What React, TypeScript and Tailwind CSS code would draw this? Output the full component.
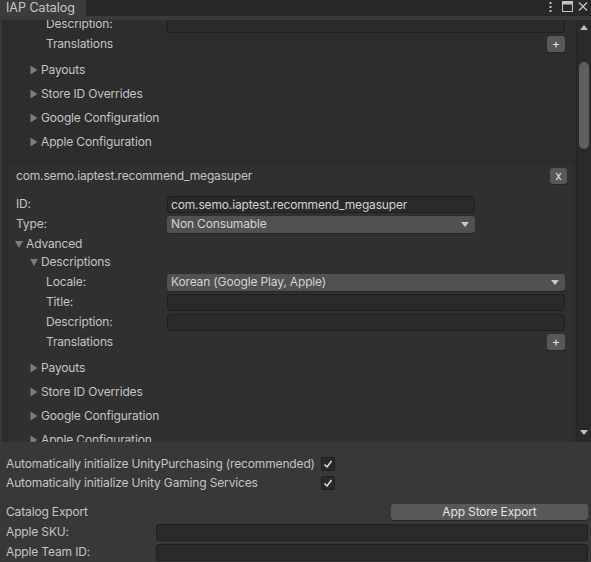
import React from "react";

const TriRight = () => (
  <svg width="8" height="10" viewBox="0 0 8 10" className="shrink-0">
    <path d="M0.5 0.5 L7.5 5 L0.5 9.5 Z" fill="#7c7c7c" />
  </svg>
);
const TriDown = () => (
  <svg width="8" height="8" viewBox="0 0 8 8" className="shrink-0">
    <path d="M0 1 L8 1 L4 8 Z" fill="#7c7c7c" />
  </svg>
);
const DropArrow = () => (
  <svg width="8" height="5" viewBox="0 0 8 5" className="shrink-0">
    <path d="M0 0 L8 0 L4 5 Z" fill="#c8c8c8" />
  </svg>
);

const Input = ({ w, value }: { w: string; value?: string }) => (
  <div className={`${w} h-[17px] bg-[#2a2a2a] border border-[#1f1f1f] rounded-[3px] pl-[3px] text-[#d2d2d2] leading-[15px] overflow-hidden whitespace-nowrap`}>
    {value}
  </div>
);

const Dropdown = ({ w, value }: { w: string; value: string }) => (
  <div className={`${w} h-[17px] bg-[#515151] rounded-[3px] pl-[4px] pr-[6px] flex items-center justify-between text-[#d2d2d2] leading-[16px] shadow-[0_1px_0_#262626]`}>
    <span className="whitespace-nowrap">{value}</span>
    <DropArrow />
  </div>
);

const SmallBtn = ({ label, cls }: { label: string; cls: string }) => (
  <div className={`${cls} h-[16px] bg-[#585858] rounded-[3px] flex items-center justify-center text-[#e4e4e4] leading-[16px] shadow-[0_1px_0_#262626]`}>
    {label}
  </div>
);

const Foldout = ({ label, pad }: { label: string; pad: string }) => (
  <div className={`flex items-center h-[24px] ${pad}`}>
    <TriRight />
    <span className="ml-[3px] whitespace-nowrap">{label}</span>
  </div>
);

const DescLabel = ({ label, children }: { label: string; children?: React.ReactNode }) => (
  <div className="flex items-center h-[20px] pl-[38px]">
    <div className="w-[121px] shrink-0 whitespace-nowrap">{label}</div>
    {children}
  </div>
);

export default function App() {
  return (
    <div className="w-[591px] h-[562px] bg-[#383838] flex flex-col overflow-hidden text-[12px] tracking-[-0.15px] text-[#c4c4c4] [font-family:Inter,'Noto_Sans',sans-serif]">
      {/* tab bar */}
      <div className="h-[16px] bg-[#282828] flex shrink-0">
        <div className="w-[86px] bg-[#3c3c3c] pl-[6px] leading-[16px] text-[#c8c8c8] text-[12.5px] tracking-normal">IAP Catalog</div>
        <div className="flex-1" />
        <div className="flex items-start pt-[2px] mr-[10px]">
          <svg width="3" height="10" viewBox="0 0 3 10">
            <rect x="0.5" y="0" width="2" height="2" fill="#c4c4c4" />
            <rect x="0.5" y="4" width="2" height="2" fill="#c4c4c4" />
            <rect x="0.5" y="8" width="2" height="2" fill="#c4c4c4" />
          </svg>
        </div>
        <div className="flex items-start pt-[1px] mr-[5px]">
          <svg width="11" height="11" viewBox="0 0 11 11">
            <rect x="0.5" y="0.5" width="10" height="10" fill="none" stroke="#c4c4c4" />
            <rect x="0.5" y="0.5" width="10" height="3" fill="#c4c4c4" />
          </svg>
        </div>
        <div className="flex items-start pt-[2px] mr-[3px]">
          <svg width="10" height="9" viewBox="0 0 10 9">
            <path d="M1 0.5 L9 8.5 M9 0.5 L1 8.5" stroke="#c4c4c4" strokeWidth="1.3" />
          </svg>
        </div>
      </div>
      <div className="h-[4px] bg-[#3a3a3a] shrink-0" />

      {/* scroll view */}
      <div className="flex h-[422px] shrink-0">
        <div className="w-[576px] overflow-hidden bg-[#2c2c2c] border-l-[2px] border-[#383838]">
          <div className="-mt-[6px]">
            {/* item 1 (partial) */}
            <div className="ml-[6px] w-[565px] bg-[#2d2d2d] pr-[8px] pb-[5px]">
              <DescLabel label="Description:">
                <Input w="flex-1" />
              </DescLabel>
              <DescLabel label="Translations">
                <div className="flex-1" />
                <SmallBtn label="+" cls="w-[18px]" />
              </DescLabel>
              <div className="h-[4px]" />
              <Foldout label="Payouts" pad="pl-[22px]" />
              <Foldout label="Store ID Overrides" pad="pl-[22px]" />
              <Foldout label="Google Configuration" pad="pl-[22px]" />
              <Foldout label="Apple Configuration" pad="pl-[22px]" />
            </div>
            <div className="h-[4px] bg-[#2a2a2a]" />
            {/* item 2 */}
            <div className="ml-[6px] w-[565px] bg-[#303030] pr-[8px]">
              <div className="flex items-center h-[26px] pl-[8px]">
                <span className="whitespace-nowrap">com.semo.iaptest.recommend_megasuper</span>
                <div className="flex-1" />
                <SmallBtn label="x" cls="w-[17px] -mr-[2px]" />
              </div>
              <div className="h-[5px]" />
              <div className="flex items-center h-[20px] pl-[8px]">
                <div className="w-[151px] shrink-0">ID:</div>
                <Input w="w-[308px]" value="com.semo.iaptest.recommend_megasuper" />
              </div>
              <div className="flex items-center h-[20px] pl-[8px]">
                <div className="w-[151px] shrink-0">Type:</div>
                <Dropdown w="w-[308px]" value="Non Consumable" />
              </div>
              <div className="flex items-center h-[20px] pl-[7px]">
                <TriDown />
                <span className="ml-[3px]">Advanced</span>
              </div>
              <div className="flex items-center h-[16px] pl-[22px]">
                <TriDown />
                <span className="ml-[3px]">Descriptions</span>
              </div>
              <div className="h-[2px]" />
              <DescLabel label="Locale:">
                <Dropdown w="flex-1" value="Korean (Google Play, Apple)" />
              </DescLabel>
              <DescLabel label="Title:">
                <Input w="flex-1" />
              </DescLabel>
              <DescLabel label="Description:">
                <Input w="flex-1" />
              </DescLabel>
              <DescLabel label="Translations">
                <div className="flex-1" />
                <SmallBtn label="+" cls="w-[18px]" />
              </DescLabel>
              <div className="h-[4px]" />
              <Foldout label="Payouts" pad="pl-[22px]" />
              <Foldout label="Store ID Overrides" pad="pl-[22px]" />
              <Foldout label="Google Configuration" pad="pl-[22px]" />
              <Foldout label="Apple Configuration" pad="pl-[22px]" />
            </div>
          </div>
        </div>
        {/* scrollbar */}
        <div className="w-[15px] bg-[#2a2a2a] border-l border-[#242424] flex flex-col items-center">
          <div className="mt-[5px]">
            <svg width="8" height="5" viewBox="0 0 8 5">
              <path d="M0 5 L8 5 L4 0 Z" fill="#c0c0c0" />
            </svg>
          </div>
          <div className="mt-[32px] w-[10px] h-[87px] rounded-full bg-[#5e5e5e]" />
          <div className="flex-1" />
          <div className="mb-[7px]">
            <svg width="8" height="5" viewBox="0 0 8 5">
              <path d="M0 0 L8 0 L4 5 Z" fill="#c0c0c0" />
            </svg>
          </div>
        </div>
      </div>

      {/* bottom settings */}
      <div className="pt-[12px] flex flex-col">
        <div className="flex items-center h-[20px] pl-[6px]">
          <div className="w-[315px] shrink-0 whitespace-nowrap">Automatically initialize UnityPurchasing (recommended)</div>
          <Check />
        </div>
        <div className="flex items-center h-[18px] pl-[6px]">
          <div className="w-[315px] shrink-0 whitespace-nowrap">Automatically initialize Unity Gaming Services</div>
          <Check />
        </div>
        <div className="h-[10px]" />
        <div className="flex items-center h-[20px] pl-[6px] pr-[3px]">
          <div className="flex-1 whitespace-nowrap">Catalog Export</div>
          <SmallBtn label="App Store Export" cls="w-[197px]" />
        </div>
        <div className="flex items-center h-[20px] pl-[6px] pr-[3px]">
          <div className="w-[150px] shrink-0">Apple SKU:</div>
          <Input w="flex-1" />
        </div>
        <div className="flex items-center h-[20px] pl-[6px] pr-[3px]">
          <div className="w-[150px] shrink-0">Apple Team ID:</div>
          <Input w="flex-1" />
        </div>
      </div>
    </div>
  );
}

function Check() {
  return (
    <div className="w-[14px] h-[14px] bg-[#2a2a2a] border border-[#1f1f1f] rounded-[2px] flex items-center justify-center">
      <svg width="10" height="10" viewBox="0 0 10 10">
        <path d="M1.5 5.5 L4 8 L8.5 2" fill="none" stroke="#e6e6e6" strokeWidth="1.4" />
      </svg>
    </div>
  );
}
